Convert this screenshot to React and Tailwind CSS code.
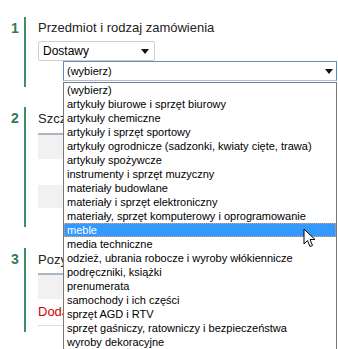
import React from 'react';

const OPTIONS = [
  '(wybierz)',
  'artykuły biurowe i sprzęt biurowy',
  'artykuły chemiczne',
  'artykuły i sprzęt sportowy',
  'artykuły ogrodnicze (sadzonki, kwiaty cięte, trawa)',
  'artykuły spożywcze',
  'instrumenty i sprzęt muzyczny',
  'materiały budowlane',
  'materiały i sprzęt elektroniczny',
  'materiały, sprzęt komputerowy i oprogramowanie',
  'meble',
  'media techniczne',
  'odzież, ubrania robocze i wyroby włókiennicze',
  'podręczniki, książki',
  'prenumerata',
  'samochody i ich części',
  'sprzęt AGD i RTV',
  'sprzęt gaśniczy, ratowniczy i bezpieczeństwa',
  'wyroby dekoracyjne',
];

function Arrow() {
  return (
    <svg width="8" height="5" viewBox="0 0 8 5">
      <path d="M0 0 L8 0 L4 5 Z" fill="#111" />
    </svg>
  );
}

function Cursor() {
  return (
    <svg className="absolute right-[19px] top-[4px]" width="13" height="20" viewBox="0 0 13 20">
      <path d="M1 1 L1 16 L4.5 12.5 L7 18.5 L9.5 17.5 L7 11.5 L12 11.5 Z" fill="#fff" stroke="#000" strokeWidth="1" strokeLinejoin="round" />
    </svg>
  );
}

function Step({ num, children, className }) {
  return (
    <div className={`flex ${className}`}>
      <div className="w-[24px] pl-[11px] pt-[4px] text-[14px] font-bold leading-[14px] text-[#2f7a5c]">{num}</div>
      <div className="flex-1 border-l-[2px] border-[#3f8d6c] pl-[12px]">{children}</div>
    </div>
  );
}

export default function App() {
  return (
    <div className="relative h-[349px] w-[338px] overflow-hidden bg-white pt-[17px] font-['Liberation_Sans',Arial,sans-serif] text-[#222]">
      {/* 1 */}
      <Step num="1" className="h-[70px]">
        <p className="pt-[3px] text-[13px] leading-[15px]">Przedmiot i rodzaj zamówienia</p>
        <div className="mt-[6px] flex h-[20px] w-[117px] items-center justify-between rounded-[2px] border border-[#cfcfcf] bg-white pl-[4px] pr-[5px] text-[12px] text-black">
          <span>Dostawy</span>
          <Arrow />
        </div>
        <div className="relative ml-[25px] mr-[1px]">
          <div className="flex h-[20px] items-center justify-between border border-[#5b8fc0] border-b-[#a9c0d8] bg-white pl-[3px] pr-[3px] text-[11px] text-black">
            <span>(wybierz)</span>
            <Arrow />
          </div>
          <ul className="absolute left-0 top-[21px] z-10 w-full border border-[#7a7a7a] bg-white text-[11px] text-black">
            {OPTIONS.map((o) =>
              o === 'meble' ? (
                <li key={o} className="relative h-[14px] border border-dotted border-[#f0a050] bg-[#3399ff] pl-[2px] leading-[12px] text-white">
                  {o}
                  <Cursor />
                </li>
              ) : (
                <li key={o} className="h-[14px] whitespace-nowrap pl-[3px] leading-[14px]">{o}</li>
              )
            )}
          </ul>
        </div>
      </Step>

      {/* 2 */}
      <Step num="2" className="mt-[20px] h-[120px]">
        <p className="pt-[4px] text-[13px] leading-[15px]">Szczegóły zamówienia</p>
        <div className="mt-[7px] mr-[8px] border-t-[2px] border-[#aab6c2]">
          <div className="h-[24px] bg-[#f1f1f1]" />
          <div className="h-[26px] bg-white" />
          <div className="h-[23px] bg-[#f1f1f1]" />
        </div>
      </Step>

      {/* 3 */}
      <Step num="3" className="mt-[21px] h-[84px]">
        <p className="pt-[4px] text-[13px] leading-[15px]">Pozycje zamówienia</p>
        <div className="mt-[6px] mr-[8px] border-t-[2px] border-[#aab6c2]">
          <div className="h-[24px] bg-[#f1f1f1]" />
          <div className="flex h-[27px] items-center border-b border-[#dddddd] text-[13px] text-[#d40000]">Dodaj pozycję</div>
        </div>
      </Step>
    </div>
  );
}
